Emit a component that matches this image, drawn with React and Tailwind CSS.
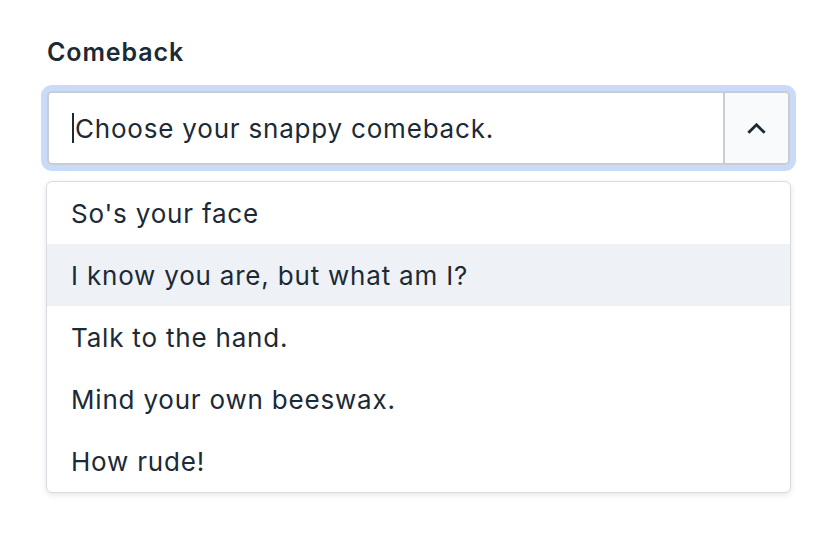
import React, { useState } from 'react';

const options = [
    "So's your face",
    'I know you are, but what am I?',
    'Talk to the hand.',
    'Mind your own beeswax.',
    'How rude!',
];

const ChevronUp = ({ className }) => (
    <svg viewBox="0 0 20 12" className={className} fill="none" stroke="currentColor" strokeWidth="3" strokeLinecap="square">
        <path d="M2.5 10 L10 2.5 L17.5 10" />
    </svg>
);

const App = () => {
    const [active, setActive] = useState(1);

    return (
        <div className="min-h-screen bg-white text-[#1c2a35]" style={{ fontFamily: 'Inter, "Noto Sans", sans-serif' }}>
            <div className="pl-[46px] pt-[35px] w-[791px]">
                <label className="block text-[25px] leading-[34px] font-semibold tracking-[0.9px] pl-px">Comeback</label>

                {/* combobox */}
                <div className="mt-[22px] ml-px w-[743px] h-[74px] flex rounded-[5px] border-2 border-[#c9cdd3] ring-[6px] ring-[#cadbfa] bg-white">
                    <div className="flex-1 flex items-center pl-[23px]">
                        <span className="w-[2px] h-[30px] bg-[#1c2a35]" />
                        <span className="text-[26px] tracking-[0.8px] ml-px">Choose your snappy comeback.</span>
                    </div>
                    <button className="w-[65px] flex items-center justify-center border-l-2 border-[#c9cdd3] bg-[#f9fafb] rounded-r-[4px]">
                        <ChevronUp className="w-[19px] h-[12px] text-[#1c2a35]" />
                    </button>
                </div>

                {/* options */}
                <ul className="mt-[16px] w-[745px] bg-white border border-[#d8dbdf] rounded-[6px] shadow-[0_2px_6px_rgba(0,0,0,0.1)] overflow-hidden">
                    {options.map((o, i) => (
                        <li
                            key={o}
                            onMouseEnter={() => setActive(i)}
                            className={`h-[62px] flex items-center pl-[24px] text-[26px] tracking-[0.8px] ${i === active ? 'bg-[#eef2f7]' : ''}`}
                        >
                            {o}
                        </li>
                    ))}
                </ul>
            </div>
        </div>
    );
};

export default App;
